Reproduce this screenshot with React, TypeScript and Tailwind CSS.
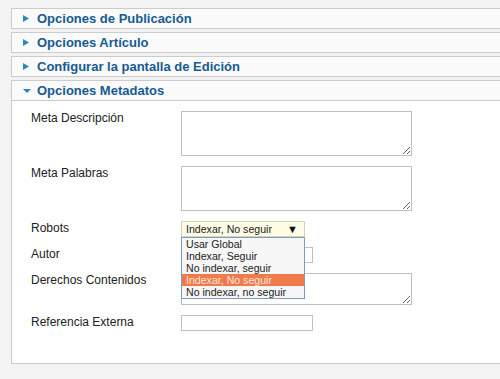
const headers = ["Opciones de Publicación", "Opciones Artículo", "Configurar la pantalla de Edición"];

const robotOptions = ["Usar Global", "Indexar, Seguir", "No indexar, seguir", "Indexar, No seguir", "No indexar, no seguir"];

function ArrowRight() {
  return (
    <svg width="6" height="7" viewBox="0 0 6 7" className="shrink-0">
      <path d="M0 0 L6 3.5 L0 7 Z" fill="#2a86bf" />
    </svg>
  );
}

function ArrowDown() {
  return (
    <svg width="8" height="4" viewBox="0 0 8 4" className="shrink-0">
      <path d="M0 0 L8 0 L4 4 Z" fill="#2a86bf" />
    </svg>
  );
}

function Row({ label, children }: { label: string; children: React.ReactNode }) {
  return (
    <div className="flex items-start">
      <div className="w-[150px] shrink-0 text-[12px] leading-[14px] text-[#222]">{label}</div>
      {children}
    </div>
  );
}

export default function App() {
  return (
    <div className="h-[379px] w-[500px] overflow-hidden bg-[#f3f3f3] pt-2 pl-[11px] font-['Liberation_Sans',Arial,sans-serif]">
      <div className="flex w-[520px] flex-col gap-[3px]">
        {headers.map((h) => (
          <div key={h} className="flex h-[21px] items-center gap-[8px] border border-[#ccc] bg-[#fafafa] pl-[11px]">
            <ArrowRight />
            <span className="text-[13px] font-bold text-[#165a92]">{h}</span>
          </div>
        ))}
        <div className="border border-[#ccc] bg-white">
          <div className="flex h-[20px] items-center gap-[6px] border-b border-[#ccc] bg-[#fafafa] pl-[11px]">
            <ArrowDown />
            <span className="text-[13px] font-bold text-[#165a92]">Opciones Metadatos</span>
          </div>
          <div className="flex h-[262px] flex-col gap-[10px] pt-[10px] pl-[19px]">
            <Row label="Meta Descripción">
              <textarea className="h-[45px] w-[231px] border border-[#c0c0c0] bg-white outline-none" />
            </Row>
            <Row label="Meta Palabras">
              <textarea className="h-[45px] w-[231px] border border-[#c0c0c0] bg-white outline-none" />
            </Row>
            <Row label="Robots">
              <div className="relative z-10">
                <div className="flex h-[16px] w-[124px] items-center justify-between border border-[#d4d2b8] bg-[#fffde6] pr-[6px] pl-[4px] text-[10.6px] leading-[14px] text-[#222]">
                  <span>Indexar, No seguir</span>
                  <span className="text-[11px] text-[#111]">▼</span>
                </div>
                <ul className="absolute top-[16px] left-0 w-[124px] border border-[#7f9db9] bg-[#f7f7f7]">
                  {robotOptions.map((o) => (
                    <li
                      key={o}
                      className={
                        o === "Indexar, No seguir"
                          ? "h-[12px] bg-[#f07a4a] pl-[4px] text-[10.6px] leading-[12px] text-[#fde6dc]"
                          : "h-[12px] pl-[4px] text-[10.6px] leading-[12px] text-[#222]"
                      }
                    >
                      {o}
                    </li>
                  ))}
                </ul>
              </div>
            </Row>
            <Row label="Autor">
              <input className="h-[16px] w-[132px] border border-[#c0c0c0] bg-white outline-none" />
            </Row>
            <Row label="Derechos Contenidos">
              <textarea className="h-[32px] w-[231px] border border-[#c0c0c0] bg-white outline-none" />
            </Row>
            <Row label="Referencia Externa">
              <input className="h-[16px] w-[132px] border border-[#c0c0c0] bg-white outline-none" />
            </Row>
          </div>
        </div>
      </div>
    </div>
  );
}
